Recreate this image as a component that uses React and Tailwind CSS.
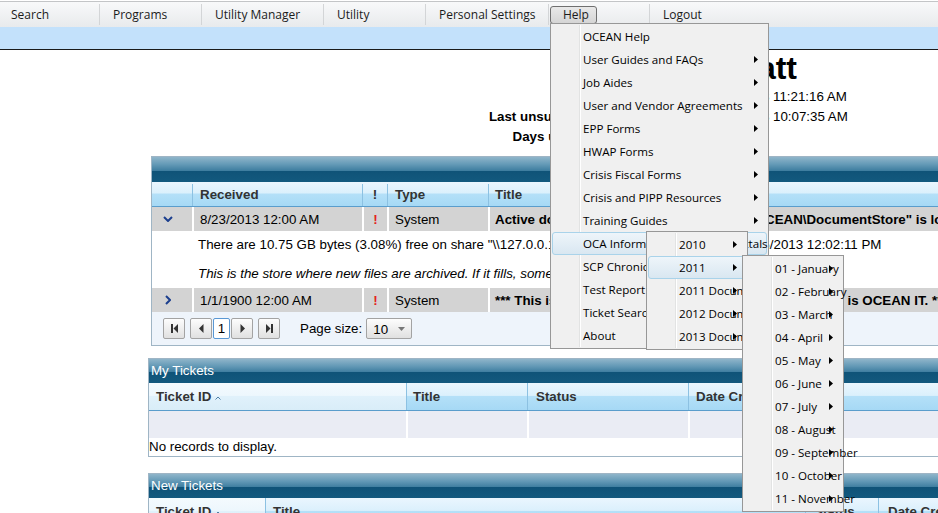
import React from "react";

const UIF = "font-['Open_Sans',sans-serif]";
const BAND = "bg-[linear-gradient(to_bottom,#8fb5ca_0%,#6399b6_30%,#3f7ea0_54%,#0f5378_56%,#13597e_100%)]";
const HEAD = "bg-[linear-gradient(to_bottom,#eaf6fe_0%,#dbf0fc_46%,#b4e0f8_50%,#a6d9f5_100%)]";
const HEADSORT = "bg-[linear-gradient(to_bottom,#f4fafe_0%,#edf7fd_46%,#e0f1fb_50%,#d9edf8_100%)]";
const BTN = "bg-[linear-gradient(to_bottom,#fdfdfd,#e0e0e0)]";

function Arrow({ active }) {
  return (
    <svg
      width="4"
      height="7"
      viewBox="0 0 4 7"
      className={active ? "absolute right-[8px] top-[7px]" : "absolute right-[9px] top-[8px]"}
    >
      <path d="M0 0L4 3.5L0 7Z" fill="#000" />
    </svg>
  );
}

function MenuItem({ text, arrow, active }) {
  return (
    <div
      className={
        active
          ? "relative h-[23px] flex items-center whitespace-nowrap pl-[30px] border border-[#a9d3ea] rounded-[3px] bg-[linear-gradient(to_bottom,#eef5fa,#d9e7f1)]"
          : "relative h-[23px] flex items-center whitespace-nowrap pl-[31px]"
      }
    >
      <span>{text}</span>
      {arrow && <Arrow active={active} />}
    </div>
  );
}

function Menu({ className, items }) {
  return (
    <div
      className={`absolute border border-[#979797] bg-[#f0f0f0] p-[1px] text-[11.6px] text-black ${UIF} ${className}`}
    >
      <div className="absolute left-[28px] top-[1px] bottom-[1px] w-[2px] border-l border-[#e2e3e3] bg-white" />
      {items.map(([t, a, act]) => (
        <MenuItem key={t} text={t} arrow={a} active={act} />
      ))}
    </div>
  );
}

function Sep() {
  return <div className="w-px h-[21px] bg-[#d3d5d7]" />;
}

function Chevron({ dir }) {
  if (dir === "down") {
    return (
      <svg width="10" height="6" viewBox="0 0 10 6">
        <path d="M1 1L5 5L9 1" fill="none" stroke="#1c3f8e" strokeWidth="2" />
      </svg>
    );
  }
  return (
    <svg width="6" height="10" viewBox="0 0 6 10">
      <path d="M1 1L5 5L1 9" fill="none" stroke="#1c3f8e" strokeWidth="2" />
    </svg>
  );
}

function SortUp() {
  return (
    <svg width="6" height="4" viewBox="0 0 6 4" className="ml-[4px] mt-[2px]">
      <path d="M0.5 3.5L3 1L5.5 3.5" fill="none" stroke="#4f7fa6" strokeWidth="1" />
    </svg>
  );
}

function PagerIcon({ kind }) {
  return (
    <svg width="9" height="9" viewBox="0 0 9 9">
      {kind === "first" && (
        <g fill="#333">
          <rect x="1" y="0" width="2" height="9" />
          <path d="M8 0L3.5 4.5L8 9Z" />
        </g>
      )}
      {kind === "prev" && <path d="M6.5 0L2 4.5L6.5 9Z" fill="#333" />}
      {kind === "next" && <path d="M2.5 0L7 4.5L2.5 9Z" fill="#333" />}
      {kind === "last" && (
        <g fill="#333">
          <path d="M1 0L5.5 4.5L1 9Z" />
          <rect x="6" y="0" width="2" height="9" />
        </g>
      )}
    </svg>
  );
}

function PBtn({ kind, className }) {
  return (
    <div
      className={`w-[22px] h-[21px] border border-[#a3a3a3] rounded-[2px] ${BTN} flex items-center justify-center ${className}`}
    >
      <PagerIcon kind={kind} />
    </div>
  );
}

function DataRow({ chevron, date, type, title }) {
  return (
    <div className="flex h-[24px] bg-[#d3d3d3] items-center">
      <div className={chevron === "down" ? "w-[40px] h-full flex items-center pl-[11px]" : "w-[40px] h-full flex items-center pl-[13px]"}>
        <Chevron dir={chevron} />
      </div>
      <div className="w-[170px] h-full flex items-center border-l-2 border-white pl-[6px] pt-px">{date}</div>
      <div className="w-[25px] h-full flex items-center justify-center border-l-2 border-white text-[#e3221b] font-bold pt-px">!</div>
      <div className="w-[101px] h-full flex items-center border-l-2 border-white pl-[6px] pt-px">{type}</div>
      <div className="flex-1 h-full flex items-center border-l-2 border-white pl-[5px] font-bold whitespace-nowrap pt-px">{title}</div>
    </div>
  );
}

export default function App() {
  const help = [
    ["OCEAN Help", false],
    ["User Guides and FAQs", true],
    ["Job Aides", true],
    ["User and Vendor Agreements", true],
    ["EPP Forms", true],
    ["HWAP Forms", true],
    ["Crisis Fiscal Forms", true],
    ["Crisis and PIPP Resources", true],
    ["Training Guides", true],
    ["OCA Information and Transmittals", false, true],
    ["SCP Chronicles", false],
    ["Test Report", false],
    ["Ticket Search", false],
    ["About", false],
  ];
  const years = [
    ["2010", true],
    ["2011", true, true],
    ["2011 Documents", true],
    ["2012 Documents", true],
    ["2013 Documents", true],
  ];
  const months = [
    ["01 - January", true],
    ["02 - February", true],
    ["03 - March", true],
    ["04 - April", true],
    ["05 - May", true],
    ["06 - June", true],
    ["07 - July", true],
    ["08 - August", true],
    ["09 - September", true],
    ["10 - October", true],
    ["11 - November", true],
  ];

  return (
    <div className="relative w-[938px] h-[513px] overflow-hidden bg-white text-black text-[13.33px] font-['Liberation_Sans',Arial,sans-serif]">
      {/* top navigation */}
      <div className="h-[27px] pt-px bg-white">
        <div className={`h-[26px] border-t border-[#c3c5c7] bg-[linear-gradient(to_bottom,#f8f9fa,#e8eaec)] flex items-center text-[12px] text-[#1b1b1b] ${UIF}`}>
          <div className="w-[99px] pl-[11px]">Search</div>
          <Sep />
          <div className="w-[101px] pl-[13px]">Programs</div>
          <Sep />
          <div className="w-[121px] pl-[13px]">Utility Manager</div>
          <Sep />
          <div className="w-[101px] pl-[13px]">Utility</div>
          <Sep />
          <div className="w-[122px] pl-[13px]">Personal Settings</div>
          <Sep />
          <div className="w-[100px] pl-px">
            <div className="w-[47px] h-[18px] border border-[#6f6f6f] rounded-[3px] bg-[linear-gradient(to_bottom,#e9e9e9,#d5d5d5)] pl-[12px] flex items-center">
              Help
            </div>
          </div>
          <Sep />
          <div className="pl-[13px]">Logout</div>
        </div>
      </div>
      <div className="h-[23px] bg-[#c3e1fb] border-b border-[#1a1a1a]" />

      {/* heading & info */}
      <div className="w-[797px] text-right text-[32px] font-bold leading-[36px] whitespace-nowrap">Welcome Matt</div>
      <div className="mt-[1px]">
        {[
          ["Last login:", "8/26/2013 11:21:16 AM"],
          ["Last unsuccessful login attempt:", "8/23/2013 10:07:35 AM"],
          ["Days until password expires:", "79"],
        ].map(([l, v]) => (
          <div key={l} className="flex h-[20px] leading-[20px] whitespace-nowrap">
            <div className="w-[697px] text-right font-bold">{l}</div>
            <div className="pl-[13px]">{v}</div>
          </div>
        ))}
      </div>

      {/* alerts table */}
      <div className="mt-[9px] ml-[151px] w-[900px] border border-[#9fb5c5]">
        <div className={`h-[25px] ${BAND}`} />
        <div className={`flex h-[25px] border-b border-[#5a9dcc] ${HEAD} font-bold text-[#333] pt-[2px]`}>
          <div className="w-[40px]" />
          <div className="w-[170px] flex items-center border-l border-[#8cc1e2] pl-[7px]">Received</div>
          <div className="w-[25px] flex items-center justify-center border-l border-[#8cc1e2]">!</div>
          <div className="w-[101px] flex items-center border-l border-[#8cc1e2] pl-[7px]">Type</div>
          <div className="flex-1 flex items-center border-l border-[#8cc1e2] pl-[6px]">Title</div>
        </div>
        <DataRow
          chevron="down"
          date="8/23/2013 12:00 AM"
          type="System"
          title={'Active document store share "\\\\127.0.0.1\\OCEAN\\DocumentStore" is low on space.'}
        />
        <div className="h-[57px] bg-white pl-[46px] pt-[5px] whitespace-nowrap">
          <div className="leading-[18px]">
            {'There are 10.75 GB bytes (3.08%) free on share "\\\\127.0.0.1\\OCEAN\\DocumentStore" as of 8/26/2013 12:02:11 PM'}
          </div>
          <div className="leading-[18px] mt-[11px] italic">
            This is the store where new files are archived. If it fills, some processes may fail.
          </div>
        </div>
        <DataRow
          chevron="right"
          date="1/1/1900 12:00 AM"
          type="System"
          title="*** This is a test... This is only a test. The sender of this is OCEAN IT. ***"
        />
        <div className="h-[33px] bg-[#eef4fb] flex items-center pl-[11px]">
          <PBtn kind="first" />
          <PBtn kind="prev" className="ml-[5px]" />
          <div className="ml-[1px] w-[17px] h-[21px] border border-[#5a98d4] rounded-[2px] bg-white flex items-center justify-center">1</div>
          <PBtn kind="next" className="ml-[1px]" />
          <PBtn kind="last" className="ml-[5px]" />
          <div className="ml-[20px]">Page size:</div>
          <div className={`ml-[4px] w-[46px] h-[21px] border border-[#a3a3a3] rounded-[2px] ${BTN} flex items-center justify-between pl-[6px] pr-[6px]`}>
            <span className="pt-[2px]">10</span>
            <svg width="7" height="4" viewBox="0 0 7 4">
              <path d="M0 0H7L3.5 4Z" fill="#777" />
            </svg>
          </div>
        </div>
      </div>

      {/* My Tickets */}
      <div className="mt-[12px] ml-[148px] w-[900px] border border-[#9fb5c5]">
        <div className={`h-[24px] ${BAND} text-white flex items-center pl-[2px]`}>My Tickets</div>
        <div className={`flex h-[28px] border-b border-[#5a9dcc] ${HEAD} font-bold text-[#333]`}>
          <div className={`w-[257px] flex items-center pl-[7px] ${HEADSORT}`}>
            Ticket ID
            <SortUp />
          </div>
          <div className="w-[121px] flex items-center border-l border-[#8cc1e2] pl-[6px]">Title</div>
          <div className="w-[161px] flex items-center border-l border-[#8cc1e2] pl-[8px]">Status</div>
          <div className="flex-1 flex items-center border-l border-[#8cc1e2] pl-[7px] whitespace-nowrap">Date Created</div>
        </div>
        <div className="flex h-[27px] bg-[#eaecf4]">
          <div className="w-[257px]" />
          <div className="w-[121px] border-l-2 border-white" />
          <div className="w-[161px] border-l-2 border-white" />
          <div className="flex-1 border-l-2 border-white" />
        </div>
        <div className="h-[18px] leading-[18px] bg-white">No records to display.</div>
      </div>

      {/* New Tickets */}
      <div className="mt-[16px] ml-[148px] w-[900px] border border-[#9fb5c5]">
        <div className={`h-[24px] ${BAND} text-white flex items-center pl-[2px]`}>New Tickets</div>
        <div className={`flex h-[28px] border-b border-[#5a9dcc] ${HEAD} font-bold text-[#333]`}>
          <div className={`w-[116px] flex items-center pl-[7px] ${HEADSORT}`}>
            Ticket ID
            <SortUp />
          </div>
          <div className="w-[540px] flex items-center border-l border-[#8cc1e2] pl-[7px]">Title</div>
          <div className="w-[73px] flex items-center border-l border-[#8cc1e2] pl-[8px]">Status</div>
          <div className="flex-1 flex items-center border-l border-[#8cc1e2] pl-[9px] whitespace-nowrap">Date Created</div>
        </div>
      </div>

      {/* open menus */}
      <Menu className="left-[550px] top-[23px] w-[219px] z-10" items={help} />
      <Menu className="left-[646px] top-[231px] w-[102px] z-20" items={years} />
      <Menu className="left-[742px] top-[255px] w-[102px] z-30" items={months} />
    </div>
  );
}
